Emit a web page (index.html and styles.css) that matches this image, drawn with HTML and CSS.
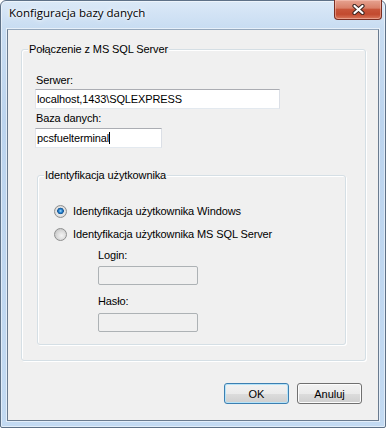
FILE: index.html
```html
<!DOCTYPE html>
<html lang="pl">
<head>
    <meta charset="UTF-8">
    <meta name="viewport" content="width=device-width, initial-scale=1.0">
    <title>Konfiguracja bazy danych</title>
    <link rel="stylesheet" href="styles.css">
</head>
<body>
    <div class="window">
        <div class="titlebar">
            <span class="title">Konfiguracja bazy danych</span>
            <div class="close-btn">
                <svg width="13" height="11" viewBox="0 0 13 11">
                    <path d="M2.5 2 L10.5 9 M10.5 2 L2.5 9" stroke="#3a2420" stroke-width="4.2" stroke-linecap="round"/>
                    <path d="M2.5 2 L10.5 9 M10.5 2 L2.5 9" stroke="#ffffff" stroke-width="2.2" stroke-linecap="round"/>
                </svg>
            </div>
        </div>

        <div class="client">
            <fieldset class="group group-main">
                <legend>Połączenie z MS SQL Server</legend>
                <div class="group-body">
                    <label class="field-label">Serwer:</label>
                    <div class="textbox textbox-wide">localhost,1433\SQLEXPRESS</div>
                    <label class="field-label field-label-next">Baza danych:</label>
                    <div class="textbox textbox-short">pcsfuelterminal<span class="caret"></span></div>

                    <fieldset class="group group-auth">
                        <legend>Identyfikacja użytkownika</legend>
                        <div class="auth-body">
                            <div class="radio-row">
                                <span class="radio checked"></span>
                                <span>Identyfikacja użytkownika Windows</span>
                            </div>
                            <div class="radio-row">
                                <span class="radio"></span>
                                <span>Identyfikacja użytkownika MS SQL Server</span>
                            </div>
                            <div class="credentials">
                                <label class="field-label">Login:</label>
                                <div class="textbox textbox-disabled"></div>
                                <label class="field-label cred-next">Hasło:</label>
                                <div class="textbox textbox-disabled"></div>
                            </div>
                        </div>
                    </fieldset>
                </div>
            </fieldset>

            <div class="buttons">
                <button class="btn btn-default">OK</button>
                <button class="btn">Anuluj</button>
            </div>
        </div>
    </div>
</body>
</html>
```

FILE: styles.css
```css
body {
    margin: 0;
    background: #ffffff;
    font-family: "Liberation Sans", Arial, sans-serif;
    font-size: 11px;
    line-height: 13px;
    letter-spacing: -0.12px;
    color: #000;
}
.window {
    width: 386px;
    height: 428px;
    box-sizing: border-box;
    display: flex;
    flex-direction: column;
    padding: 0 6px 6px 6px;
    border: 1px solid #5e7187;
    border-radius: 6px 6px 2px 2px;
    background: linear-gradient(180deg, #dbe9f7 0px, #c9ddf2 26px, #bcd4ee 120px, #c3daf2 100%);
    box-shadow: inset 0 0 0 1px rgba(255, 255, 255, 0.5);
}
.titlebar {
    height: 28px;
    display: flex;
    align-items: flex-start;
}
.title {
    font-family: "Open Sans", "Liberation Sans", sans-serif;
    font-size: 11.5px;
    line-height: 16px;
    letter-spacing: 0;
    padding: 4px 0 0 2px;
    color: #000;
    text-shadow: 0 0 6px #ffffff, 0 0 3px #ffffff;
}
.close-btn {
    margin: -1px -3px 0 auto;
    width: 48px;
    height: 20px;
    box-sizing: border-box;
    border: 1px solid #7a2e22;
    border-top: none;
    border-radius: 0 0 4px 4px;
    background: linear-gradient(180deg, #e6a391 0%, #d98069 42%, #c8553a 50%, #c24a2f 75%, #d9785c 100%);
    box-shadow: inset 0 0 0 1px rgba(255, 210, 200, 0.45);
    display: flex;
    align-items: center;
    justify-content: center;
}
.client {
    flex: 1;
    background: #f0f0f0;
    border: 1px solid #6a7b8f;
    border-top-color: #95a8bd;
    box-shadow: 0 0 0 1px rgba(255, 255, 255, 0.55);
    display: flex;
    flex-direction: column;
}
.group {
    margin: 0;
    padding: 0;
    border: 1px solid #d5dfe5;
    border-radius: 3px;
    box-shadow: inset 1px 1px 0 #ffffff, 1px 1px 0 #ffffff;
    min-width: 0;
    box-sizing: border-box;
}
.group legend {
    margin-left: 6px;
    padding: 0 1px;
    background: #f0f0f0;
    line-height: 13px;
}
.group-main {
    margin: 13px 0 0 13px;
    width: 345px;
}
.group-body {
    padding: 18px 0 15px 13px;
}
.field-label {
    display: block;
    padding-left: 1px;
    margin-bottom: 2px;
}
.field-label-next {
    margin-top: 3px;
    margin-bottom: 3px;
}
.textbox {
    box-sizing: border-box;
    height: 20px;
    background: #ffffff;
    border: 1px solid;
    border-color: #abadb3 #dbdfe6 #e3e9ef #e2e3ea;
    padding: 0 1px;
    line-height: 18px;
    white-space: nowrap;
}
.textbox-wide {
    width: 245px;
}
.textbox-short {
    width: 127px;
}
.caret {
    display: inline-block;
    width: 1px;
    height: 12px;
    background: #000;
    vertical-align: -2px;
}
.group-auth {
    margin: 21px 0 0 2px;
    width: 309px;
}
.auth-body {
    padding: 21px 0 12px 16px;
}
.radio-row {
    height: 16px;
    display: flex;
    align-items: center;
    gap: 6px;
}
.radio-row + .radio-row {
    margin-top: 7px;
}
.radio {
    width: 13px;
    height: 13px;
    box-sizing: border-box;
    border-radius: 50%;
    border: 1px solid #8e8f8f;
    background: radial-gradient(circle at 60% 60%, #f4f4f4 0%, #dcdcdc 45%, #c9c9c9 75%, #f2f2f2 100%);
}
.radio.checked {
    background:
        radial-gradient(circle at 50% 45%, #a9dcff 0px, #2b8ad6 1.6px, #16528f 3px, rgba(22, 82, 143, 0) 3.6px),
        radial-gradient(circle at 50% 50%, #f8f8f8 0%, #e2e2e2 60%, #cfcfcf 80%, #f0f0f0 100%);
}
.credentials {
    padding-left: 44px;
    margin-top: 7px;
}
.credentials .field-label {
    padding-left: 0;
    margin-bottom: 4px;
}
.credentials .cred-next {
    margin-top: 10px;
    margin-bottom: 5px;
}
.textbox-disabled {
    width: 100px;
    height: 19px;
    background: #f0f0f0;
    border: 1px solid #adb2b5;
    border-radius: 2px;
}
.buttons {
    display: flex;
    justify-content: flex-end;
    gap: 8px;
    margin-top: 22px;
    padding-right: 16px;
}
.btn {
    width: 65px;
    height: 21px;
    padding: 0;
    font-family: "Liberation Sans", Arial, sans-serif;
    font-size: 11px;
    color: #000;
    border: 1px solid #707070;
    border-radius: 3px;
    background: linear-gradient(180deg, #f2f2f2 0%, #ebebeb 50%, #dddddd 51%, #cfcfcf 100%);
    box-shadow: inset 0 0 0 1px #fcfcfc;
}
.btn-default {
    border-color: #3c7fb1;
    box-shadow: inset 0 0 0 1px #b6e3f8;
}
```
